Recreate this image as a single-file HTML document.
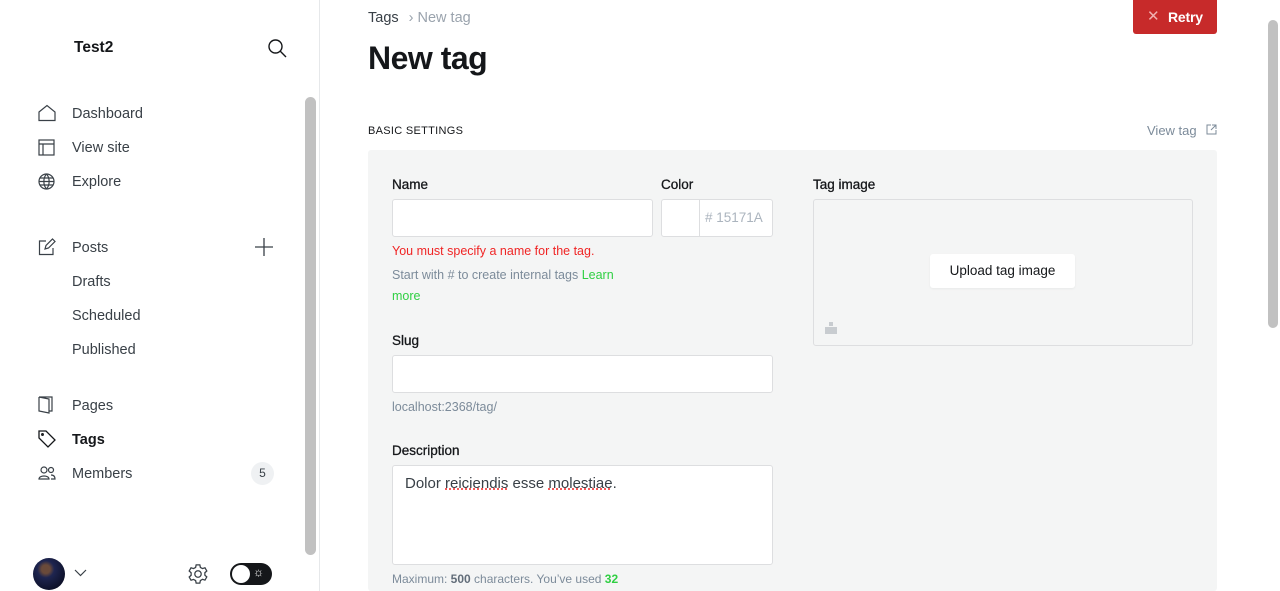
<!DOCTYPE html>
<html><head><meta charset="utf-8"><style>
*{box-sizing:border-box;margin:0;padding:0}
body{width:1280px;height:591px;overflow:hidden;background:#fff;font-family:"Liberation Sans",sans-serif;color:#15171a;position:relative}
.abs{position:absolute}
.side{position:absolute;left:0;top:0;width:320px;height:591px;border-right:1px solid #e6e8ea;background:#fff}
.nav{position:absolute;left:72px;font-size:14.5px;color:#394047}
.ic{position:absolute;left:38px}
.lbl{font-size:13.5px;color:#15171a;position:absolute;-webkit-text-stroke:0.3px #15171a}
.inp{position:absolute;background:#fff;border:1px solid #dddee0;border-radius:3px}
.hint{position:absolute;font-size:12.5px;color:#7c8b9a}
</style></head><body>
<div class="side">
  <div class="abs" style="left:74px;top:39px;font-size:15.5px;font-weight:bold">Test2</div>
  <svg class="abs" style="left:267px;top:38px" width="20" height="20" viewBox="0 0 20 20" fill="none" stroke="#15171a" stroke-width="1.4"><circle cx="8.5" cy="8.5" r="6.5"/><path d="M13.3 13.3L19 19"/></svg>
  <svg class="ic" style="top:104px" width="18" height="18" viewBox="0 0 18 18" fill="none" stroke="#394047" stroke-width="1.2"><path d="M1 8L9 1.5 17 8V16.5H1Z"/></svg>
  <div class="nav" style="top:106px">Dashboard</div>
  <svg class="ic" style="top:139px" width="17" height="17" viewBox="0 0 17 17" fill="none" stroke="#394047" stroke-width="1.2"><rect x="1" y="1" width="15" height="15"/><path d="M1 5H16M5 5V16"/></svg>
  <div class="nav" style="top:140px">View site</div>
  <svg class="ic" style="top:173px" width="17" height="17" viewBox="0 0 17 17" fill="none" stroke="#394047" stroke-width="1.2"><circle cx="8.5" cy="8.5" r="7.5"/><path d="M1 8.5H16M8.5 1C5 5 5 12 8.5 16M8.5 1C12 5 12 12 8.5 16M2 5H15M2 12H15"/></svg>
  <div class="nav" style="top:174px">Explore</div>
  <svg class="ic" style="top:238px" width="18" height="18" viewBox="0 0 18 18" fill="none" stroke="#394047" stroke-width="1.2"><path d="M8 3H1.5V16.5H15V10M7 11L8 7.5 14.5 1 17 3.5 10.5 10Z"/></svg>
  <div class="nav" style="top:240px">Posts</div>
  <svg class="abs" style="left:255px;top:238px" width="18" height="18" viewBox="0 0 18 18" stroke="#394047" stroke-width="1.3"><path d="M9 0V18M0 9H18"/></svg>
  <div class="nav" style="top:274px">Drafts</div>
  <div class="nav" style="top:308px">Scheduled</div>
  <div class="nav" style="top:342px">Published</div>
  <svg class="ic" style="top:396px" width="16" height="18" viewBox="0 0 16 18" fill="none" stroke="#394047" stroke-width="1.2"><path d="M1 1H14V15H11M1 1V15L11 17V3L1 1"/></svg>
  <div class="nav" style="top:398px">Pages</div>
  <svg class="ic" style="top:430px" width="18" height="18" viewBox="0 0 18 18" fill="none" stroke="#15171a" stroke-width="1.3"><path d="M1 1H8L17 10 10 17 1 8Z"/><circle cx="4.5" cy="4.5" r="0.8"/></svg>
  <div class="nav" style="top:432px;font-weight:bold;color:#15171a">Tags</div>
  <svg class="ic" style="top:465px" width="18" height="16" viewBox="0 0 18 16" fill="none" stroke="#394047" stroke-width="1.2"><circle cx="6" cy="5" r="3"/><path d="M1 14C1 10 11 10 11 14Z"/><circle cx="13" cy="5" r="2.5"/><path d="M13 10C15 10 17 11 17 14H13"/></svg>
  <div class="nav" style="top:466px">Members</div>
  <div class="abs" style="left:251px;top:462px;width:23px;height:23px;border-radius:50%;background:#eff1f3;font-size:12px;color:#394047;text-align:center;line-height:23px">5</div>
  <div class="abs" style="left:305px;top:97px;width:11px;height:458px;border-radius:6px;background:#c1c1c1"></div>
  <div class="abs" style="left:33px;top:558px;width:32px;height:32px;border-radius:50%;background:radial-gradient(circle at 40% 35%,#6a4a3a 0 15%,#1e2550 30%,#0b0e24 80%)"></div>
  <svg class="abs" style="left:74px;top:569px" width="13" height="8" viewBox="0 0 13 8" fill="none" stroke="#394047" stroke-width="1.2"><path d="M1 1L6.5 6.5 12 1"/></svg>
  <svg class="abs" style="left:187px;top:563px" width="22" height="22" viewBox="0 0 24 24" fill="none" stroke="#394047" stroke-width="1.4"><circle cx="12" cy="12" r="3.5"/><path d="M10 2h4l.6 2.8 2.3 1.3 2.7-.9 2 3.5-2.1 1.9v2.7l2.1 1.9-2 3.5-2.7-.9-2.3 1.3L14 22h-4l-.6-2.8-2.3-1.3-2.7.9-2-3.5 2.1-1.9v-2.7L2.4 8.7l2-3.5 2.7.9 2.3-1.3Z"/></svg>
  <div class="abs" style="left:230px;top:563px;width:42px;height:22px;border-radius:11px;background:#15171a"></div>
  <div class="abs" style="left:232px;top:565px;width:18px;height:18px;border-radius:50%;background:#fff"></div>
  <div class="abs" style="left:253px;top:565px;color:#fff;font-size:12px">☼</div>
</div>
<div class="abs" style="left:368px;top:10px;font-size:14.5px;color:#394047">Tags <span style="color:#9aa3ad;margin:0 4px 0 6px">›</span><span style="color:#9aa3ad">New tag</span></div>
<div class="abs" style="left:368px;top:40px;font-size:32px;font-weight:bold;letter-spacing:-0.5px">New tag</div>
<div class="abs" style="left:1133px;top:0;width:84px;height:34px;background:#c72a2a;border-radius:0 0 3px 3px;color:#fff;font-weight:bold;font-size:14px;line-height:34px"><span style="position:absolute;left:14px;font-weight:normal;color:#f0b0b0;font-size:15px">✕</span><span style="position:absolute;left:35px;letter-spacing:-0.2px">Retry</span></div>
<div class="abs" style="left:368px;top:125px;font-size:11px;letter-spacing:0.3px;color:#15171a">BASIC SETTINGS</div>
<div class="abs" style="left:1147px;top:123px;font-size:13px;color:#7c8b9a">View tag</div>
<svg class="abs" style="left:1206px;top:124px" width="11" height="11" viewBox="0 0 11 11" fill="none" stroke="#7c8b9a" stroke-width="1"><path d="M5 1H1V10H10V6M6 1H10V5M10 1L5 6"/></svg>
<div class="abs" style="left:368px;top:150px;width:849px;height:441px;background:#f4f5f5;border-radius:3px"></div>
<div class="lbl" style="left:392px;top:177px">Name</div>
<div class="inp" style="left:392px;top:199px;width:261px;height:38px"></div>
<div class="lbl" style="left:661px;top:177px">Color</div>
<div class="inp" style="left:661px;top:199px;width:112px;height:38px"><div class="abs" style="left:37px;top:0;height:36px;border-left:1px solid #dddee0"></div><div class="abs" style="left:43px;top:10px;font-size:13.5px;color:#abb4be">#&nbsp;15171A</div></div>
<div class="abs" style="left:392px;top:244px;font-size:12.5px;color:#f02525">You must specify a name for the tag.</div>
<div class="hint" style="left:392px;top:265px;line-height:21px;width:250px">Start with # to create internal tags <span style="color:#30cf43">Learn more</span></div>
<div class="lbl" style="left:813px;top:177px">Tag image</div>
<div class="abs" style="left:813px;top:199px;width:380px;height:147px;border:1px solid #dddee0;border-radius:3px;background:#f4f5f5"></div>
<div class="abs" style="left:930px;top:254px;width:145px;height:34px;background:#fff;border-radius:3px;font-size:13.5px;color:#15171a;text-align:center;line-height:34px;box-shadow:0 1px 2px rgba(0,0,0,.05)">Upload tag image</div>
<div class="abs" style="left:825px;top:322px;width:12px;height:12px"><div class="abs" style="left:4px;top:0;width:4px;height:4px;background:#c8ccd0"></div><div class="abs" style="left:0;top:5px;width:12px;height:7px;background:#c8ccd0"></div></div>
<div class="lbl" style="left:392px;top:333px">Slug</div>
<div class="inp" style="left:392px;top:355px;width:381px;height:38px"></div>
<div class="hint" style="left:392px;top:400px">localhost:2368/tag/</div>
<div class="lbl" style="left:392px;top:443px">Description</div>
<div class="inp" style="left:392px;top:465px;width:381px;height:100px"><div class="abs" style="left:12px;top:9px;font-size:15px;color:#394047">Dolor <span style="text-decoration:underline dotted #f02525">reiciendis</span> esse <span style="text-decoration:underline dotted #f02525">molestiae</span>.</div></div>
<div class="hint" style="left:392px;top:572px;font-size:12px">Maximum: <b style="color:#626d79">500</b> characters. You’ve used <b style="color:#30cf43">32</b></div>
<div class="abs" style="left:1268px;top:20px;width:10px;height:308px;border-radius:5px;background:#c1c1c1"></div>
</body></html>
